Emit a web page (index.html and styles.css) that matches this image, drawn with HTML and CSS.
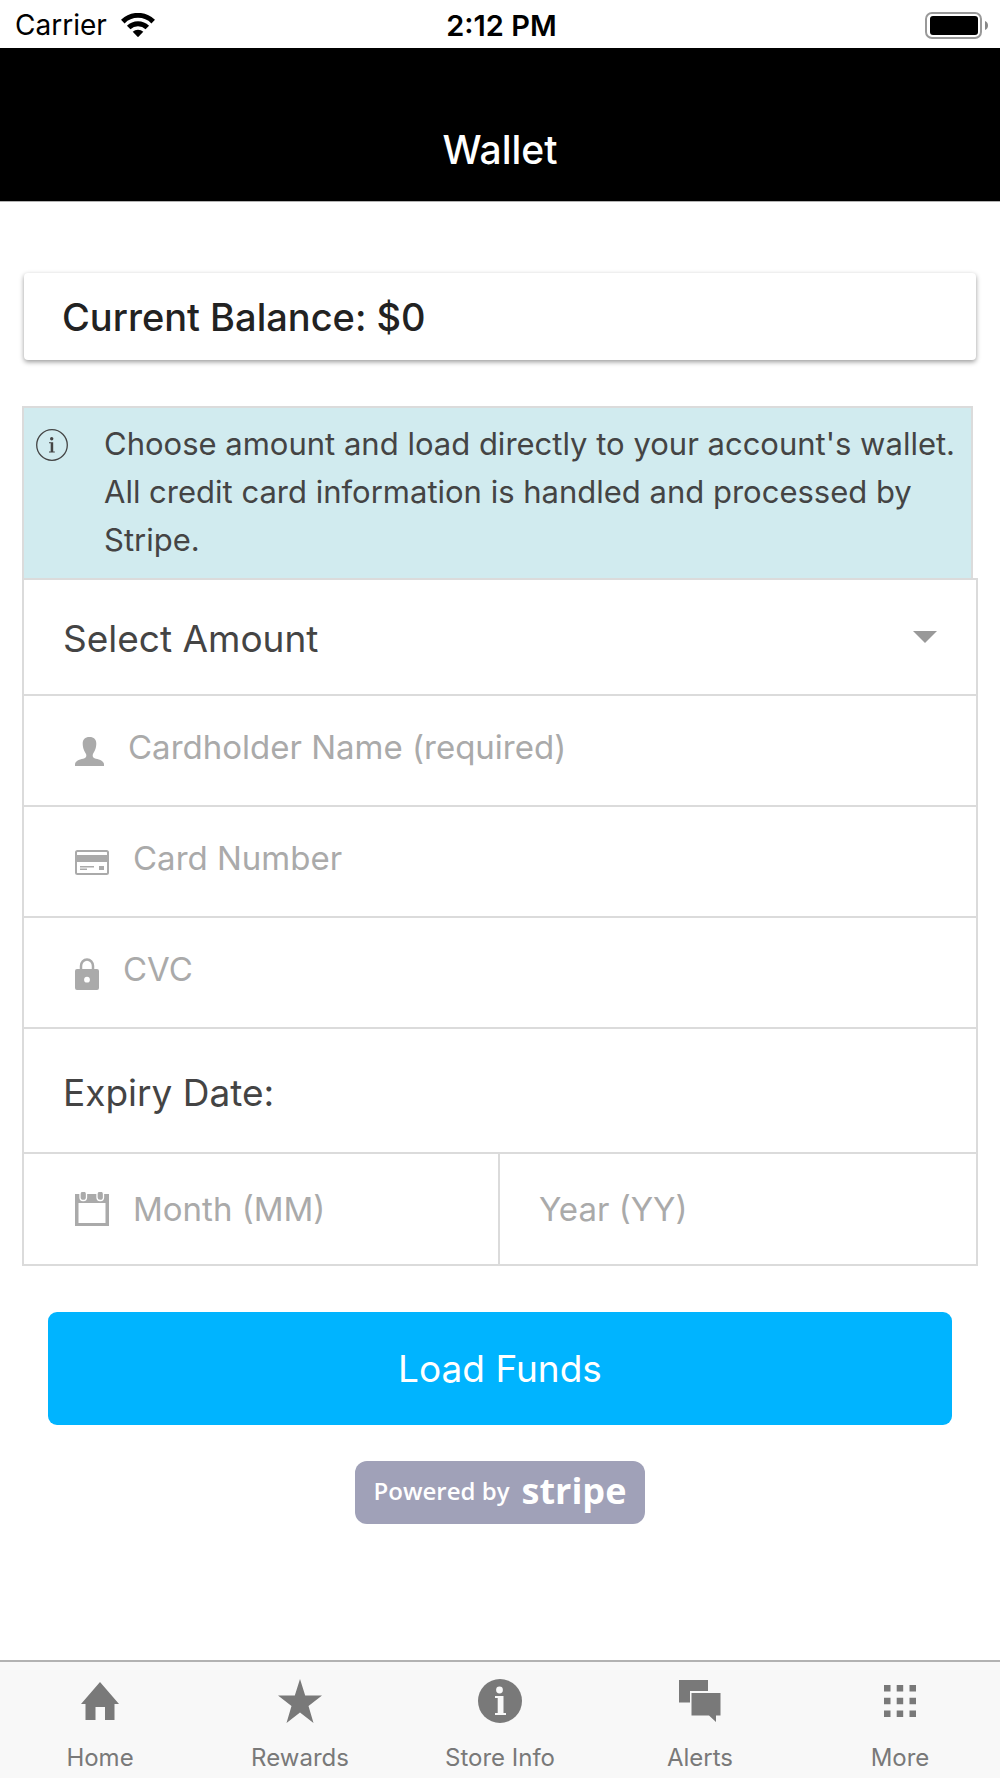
FILE: index.html
```html
<!DOCTYPE html>
<html lang="en">
<head>
  <meta charset="utf-8">
  <meta name="viewport" content="width=device-width, initial-scale=1">
  <title>Wallet</title>
  <link rel="stylesheet" href="styles.css">
</head>
<body>
  <div class="status">
    <div class="status-left">
      <span>Carrier</span>
      <svg class="wifi" viewBox="0 0 34 24" aria-hidden="true">
        <path fill="none" stroke="#000" stroke-width="5" d="M1.8 8.6a21.6 21.6 0 0 1 30.4 0"/>
        <path fill="none" stroke="#000" stroke-width="5" d="M7.7 14.5a13.3 13.3 0 0 1 18.6 0"/>
        <path d="M17 24.2l-5.3-5.4a7.6 7.6 0 0 1 10.6 0z"/>
      </svg>
    </div>
    <time class="status-time">2:12 PM</time>
    <svg class="battery" viewBox="0 0 63 27" aria-hidden="true">
      <rect x="1" y="1" width="55" height="25" rx="6" fill="none" stroke="#999" stroke-width="2"/>
      <rect x="5" y="4" width="48" height="19" rx="3"/>
      <path fill="#888" d="M60 9c2 .8 3 2.400 3 4.500s-1 3.700-3 4.500z"/>
    </svg>
  </div>

  <header class="header">
    <h1>Wallet</h1>
  </header>

  <main class="content">
    <section class="balance">Current Balance: $0</section>

    <div class="notice">
      <svg class="notice-icon" viewBox="0 0 32 32" aria-hidden="true">
        <circle cx="16" cy="16" r="15.300" fill="none" stroke="#444" stroke-width="1.300"/>
        <circle cx="15.700" cy="9.800" r="1.700" fill="#444"/>
        <path fill="#444" d="M13 13.300h4.200v9.200h1.600v1H13v-1h1.700v-8.200H13z"/>
      </svg>
      <p>Choose amount and load directly to your account's wallet. All credit card information is handled and processed by Stripe.</p>
    </div>

    <form class="form">
      <label class="row row-select">
        <select aria-label="Select Amount">
          <option>Select Amount</option>
        </select>
        <svg class="caret" viewBox="0 0 24 12" aria-hidden="true"><path fill="#999" d="M0 0h24L12 12z"/></svg>
      </label>
      <label class="row field raised">
        <svg class="icon-person" viewBox="0 0 29 29" aria-hidden="true">
          <path fill="#aaa" d="M14.500 0c4.500 0 6.800 2.500 6.800 6.500 0 5.200-2 8-3.300 10.500-.8 2 0 3.600 1.500 4.300 3.500 1.200 9.500 2 9.500 6.200V29H0v-1.500c0-4.200 6-5 9.500-6.200 1.500-.7 2.300-2.300 1.500-4.300-1.300-2.500-3.300-5.300-3.300-10.500C7.700 2.500 10 0 14.500 0z"/>
        </svg>
        <input type="text" placeholder="Cardholder Name (required)" aria-label="Cardholder Name (required)">
      </label>
      <label class="row field raised">
        <svg class="icon-card" viewBox="0 0 34 25" aria-hidden="true">
          <rect x="1" y="1" width="32" height="23" rx="1.500" fill="none" stroke="#aaa" stroke-width="2"/>
          <path fill="#aaa" d="M1 5h32v7H1zM5 16h14v1.500H5zM5 18.500h7V20H5zM24 16h5v4h-5z"/>
        </svg>
        <input type="text" inputmode="numeric" placeholder="Card Number" aria-label="Card Number">
      </label>
      <label class="row field raised">
        <svg class="icon-lock" viewBox="0 0 24 32" aria-hidden="true">
          <path fill="none" stroke="#aaa" stroke-width="2.500" d="M6 12V8a6 6.500 0 0 1 12 0v4"/>
          <path fill="#aaa" fill-rule="evenodd" d="M2 11h20a2 2 0 0 1 2 2v17a2 2 0 0 1-2 2H2a2 2 0 0 1-2-2V13a2 2 0 0 1 2-2zm10 7.800a2.900 2.900 0 1 0 0 5.800 2.900 2.900 0 0 0 0-5.800z"/>
        </svg>
        <input type="text" inputmode="numeric" placeholder="CVC" aria-label="CVC">
      </label>
      <div class="row row-heading" id="expiry">Expiry Date:</div>
      <div class="split" role="group" aria-labelledby="expiry">
        <label class="row field">
          <svg class="icon-calendar" viewBox="0 0 34 34" aria-hidden="true">
            <path fill="#aaa" fill-rule="evenodd" d="M0 2h34v32H0zM3.500 11v20h27V11z"/>
            <g fill="#aaa" stroke="#fff" stroke-width="1.300">
              <rect x="5" y="-1" width="6.500" height="9.500" rx="3"/>
              <rect x="22" y="-1" width="6.500" height="9.500" rx="3"/>
            </g>
          </svg>
          <input type="text" inputmode="numeric" placeholder="Month (MM)" aria-label="Month (MM)">
        </label>
        <label class="row field field-plain">
          <input type="text" inputmode="numeric" placeholder="Year (YY)" aria-label="Year (YY)">
        </label>
      </div>
    </form>

    <button class="submit" type="button">Load Funds</button>
    <a class="stripe" href="#stripe"><span>Powered by</span><strong>stripe</strong></a>
  </main>

  <nav class="tabs">
    <a href="#home">
      <svg viewBox="0 0 44 44" aria-hidden="true"><path d="M22 3l19 22h-4.500v16H27V28h-9.500v13H7.500V25H3z"/></svg>
      <span>Home</span>
    </a>
    <a href="#rewards">
      <svg viewBox="0 0 44 44" aria-hidden="true"><path d="M22 0l5.200 16.500H44L30.500 27l5 17L22 33.500 8.500 44l5-17L0 16.500h16.800z"/></svg>
      <span>Rewards</span>
    </a>
    <a href="#store">
      <svg viewBox="0 0 44 44" aria-hidden="true">
        <circle cx="22" cy="22" r="22"/>
        <circle cx="21.500" cy="11" r="3.400" fill="#f8f8f8"/>
        <path fill="#f8f8f8" d="M17 17h8.500v17H28v2H17v-2h2.700V19H17z"/>
      </svg>
      <span>Store Info</span>
    </a>
    <a href="#alerts">
      <svg viewBox="0 0 44 44" aria-hidden="true"><path d="M1 1h29v11H12v11.500H1zM13.500 14h29v22.500H38V43l-7-6.500H13.500z"/></svg>
      <span>Alerts</span>
    </a>
    <a href="#more">
      <svg viewBox="0 0 44 44" aria-hidden="true"><path d="M6 6h6.500v6.500H6zM18.700 6h6.500v6.500h-6.500zM31.500 6H38v6.500h-6.500zM6 18.700h6.500v6.500H6zM18.700 18.700h6.500v6.500h-6.500zM31.500 18.700H38v6.500h-6.500zM6 31.500h6.500V38H6zM18.700 31.500h6.500V38h-6.500zM31.500 31.500H38V38h-6.500z"/></svg>
      <span>More</span>
    </a>
  </nav>
</body>
</html>
```
FILE: styles.css
```css
* {
  box-sizing: border-box;
}

body {
  margin: 0;
  min-height: 100vh;
  display: flex;
  flex-direction: column;
  background: #fff;
  color: #444;
  font-family: Inter, "Liberation Sans", sans-serif;
  font-size: 31px;
}

svg {
  display: block;
  flex: none;
}

.status {
  display: grid;
  grid-template-columns: 1fr auto 1fr;
  align-items: center;
  height: 48px;
  padding: 2px 12px 0 15px;
  color: #000;
  font-size: 28px;
}

.status-left {
  display: flex;
  align-items: center;
  gap: 14px;
}

.wifi {
  width: 34px;
  height: 24px;
}

.status-time {
  font-size: 29px;
  font-weight: 600;
}

.battery {
  width: 63px;
  height: 27px;
  justify-self: end;
}

.header {
  display: flex;
  justify-content: center;
  align-items: flex-end;
  height: 154px;
  padding-bottom: 27px;
  background: #000;
  border-bottom: 1px solid #b2b2b2;
  color: #fff;
}

.header h1 {
  margin: 0;
  font-size: 39px;
  line-height: 48px;
  font-weight: 500;
}

.content {
  flex: 1;
  display: flex;
  flex-direction: column;
  padding: 71px 22px 40px;
}

.balance {
  margin: 0 2px 46px;
  padding: 1px 38px 0;
  border-radius: 4px;
  box-shadow: 0 2px 5px rgba(0, 0, 0, 0.4);
  color: #222;
  font-size: 38px;
  line-height: 86px;
  font-weight: 500;
}

.notice {
  display: flex;
  gap: 36px;
  margin-right: 5px;
  padding: 12px 12px 14px;
  border: 2px solid #dbdbdb;
  border-bottom: 0;
  background: #d1ebef;
}

.notice p {
  margin: 0;
  line-height: 48px;
}

.notice-icon {
  width: 32px;
  height: 32px;
  margin-top: 9px;
}

.form {
  border: 2px solid #dbdbdb;
}

.row {
  display: flex;
  align-items: center;
  height: 111px;
  padding: 0 39px;
  border-bottom: 2px solid #dbdbdb;
}

.row-select {
  height: 116px;
  font-size: 37px;
}

.row-select select {
  padding-top: 2px;
}

.row-heading {
  height: 125px;
  padding-top: 4px;
  font-size: 37px;
}

.field {
  gap: 24px;
  padding-left: 51px;
  font-size: 33px;
}

.field-plain {
  padding-left: 39px;
}

.raised {
  padding-top: 2px;
}

.raised input {
  padding-bottom: 10px;
}

.split {
  display: grid;
  grid-template-columns: repeat(2, minmax(0, 1fr));
}

.split .row {
  height: 110px;
  border-bottom: 0;
}

.split .row:first-child {
  border-right: 2px solid #dbdbdb;
}

input,
select {
  flex: 1;
  width: 100%;
  min-width: 0;
  margin: 0;
  padding: 0;
  border: 0;
  outline: 0;
  background: none;
  color: #444;
  font: inherit;
  appearance: none;
}

input::placeholder {
  color: #aaa;
  opacity: 1;
}

.caret {
  width: 24px;
  height: 12px;
}

.icon-person {
  width: 29px;
  height: 29px;
}

.icon-card {
  width: 34px;
  height: 25px;
}

.icon-lock {
  width: 24px;
  height: 32px;
}

.icon-calendar {
  width: 34px;
  height: 34px;
}

.submit {
  height: 113px;
  margin: 46px 26px 36px;
  padding: 0;
  border: 0;
  border-radius: 9px;
  background: #00b4ff;
  color: #fff;
  font: inherit;
  font-size: 37px;
}

.stripe {
  align-self: center;
  display: flex;
  align-items: center;
  gap: 12px;
  padding: 0 19px 4px;
  border-radius: 12px;
  background: #a0a1b8;
  color: #fff;
  font-family: "Open Sans", sans-serif;
  font-size: 24px;
  font-weight: 600;
  line-height: 59px;
  text-decoration: none;
}

.stripe strong {
  font-size: 36px;
  font-weight: 700;
}

.tabs {
  display: grid;
  grid-template-columns: repeat(5, minmax(0, 1fr));
  height: 118px;
  border-top: 2px solid #b2b2b2;
  background: #f8f8f8;
}

.tabs a {
  display: flex;
  flex-direction: column;
  align-items: center;
  gap: 19px;
  padding-top: 17px;
  color: #797979;
  font-size: 24px;
  line-height: 32px;
  text-decoration: none;
}

.tabs svg {
  width: 44px;
  height: 44px;
  fill: currentColor;
}
```
